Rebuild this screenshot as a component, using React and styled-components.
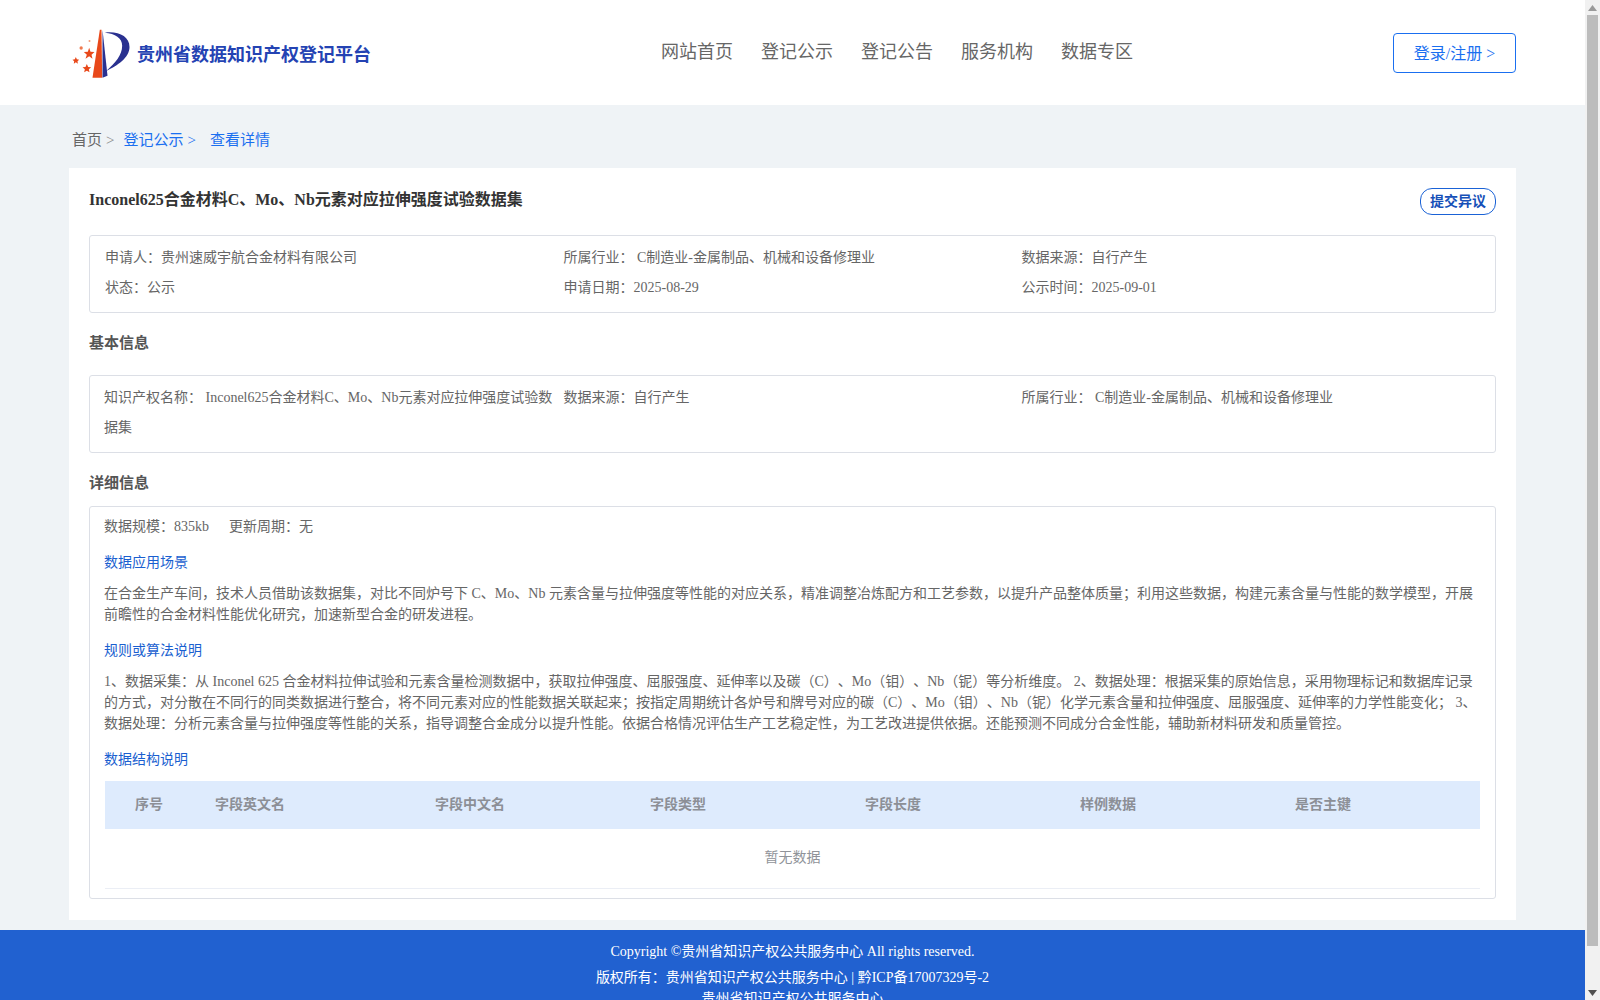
import React from "react";
import styled, { createGlobalStyle } from "styled-components";

const Global = createGlobalStyle`
  html, body { margin: 0; padding: 0; overflow: hidden; height: 1000px; }
  body {
    background: #eff3f6;
    font-family: "Liberation Serif", "Noto Sans CJK SC", serif;
    font-size: 14px;
    color: #666;
    text-spacing-trim: space-all;
    text-autospace: no-autospace;
  }
  * { box-sizing: border-box; }
`;

const Page = styled.div`
  width: 1585px;
  min-height: 1042px;
  display: flex;
  flex-direction: column;
`;
const ScrollTrack = styled.div`
  position: fixed;
  top: 0;
  right: 0;
  bottom: 0;
  width: 15px;
  background: #f1f1f1;
  display: flex;
  flex-direction: column;
  justify-content: space-between;
  align-items: stretch;
`;
const ScrollArrow = styled.div`
  height: 15px;
  display: flex;
  align-items: center;
  justify-content: center;
`;
const ScrollThumb = styled.div`
  flex: 1;
  margin: 0 2px 39px 2px;
  background: #bcbcbc;
`;
const Header = styled.header`
  height: 105px;
  background: #fff;
  display: flex;
  align-items: center;
  padding: 0 69px 0 72px;
`;
const Brand = styled.div`
  width: 589px;
  display: flex;
  align-items: center;
  gap: 6px;
  padding-top: 2px;
`;
const BrandName = styled.span`
  font-size: 18px;
  font-weight: 700;
  color: #2443b3;
  padding-bottom: 2px;
`;
const Nav = styled.nav`
  flex: 1;
  display: flex;
  gap: 28px;
  padding-bottom: 5px;
`;
const NavLink = styled.a`
  font-size: 18px;
  color: #666;
`;
const LoginButton = styled.button`
  width: 123px;
  height: 40px;
  background: #fff;
  border: 1px solid #1a6ff0;
  border-radius: 4px;
  color: #1a6ff0;
  font: inherit;
  font-size: 16px;
  padding: 0 0 2px;
`;
const Main = styled.main`
  padding: 0 69px;
`;
const Crumbs = styled.div`
  height: 63px;
  display: flex;
  align-items: center;
  padding: 3px 0 0 3px;
  font-size: 15px;
`;
const Crumb = styled.span`
  color: ${(p) => (p.$active ? "#1a6ff0" : "#666")};
  margin-right: ${(p) => p.$gap || 0}px;
`;
const Sep = styled.span`
  color: ${(p) => (p.$active ? "#1a6ff0" : "#888")};
  margin-left: 4px;
`;
const Card = styled.section`
  background: #fff;
  padding: 20px;
  width: 1447px;
  height: 752px;
`;
const TitleRow = styled.div`
  height: 47px;
  display: flex;
  justify-content: space-between;
  align-items: flex-start;
`;
const Title = styled.h1`
  margin: 1px 0 0;
  font-size: 16px;
  line-height: 22px;
  color: #333;
`;
const Objection = styled.button`
  width: 76px;
  height: 27px;
  background: #fff;
  border: 1px solid #1a62d6;
  border-radius: 12px;
  color: #1650b8;
  font: inherit;
  font-size: 14px;
  font-weight: 700;
  padding: 0 0 3px;
`;
const InfoBox = styled.div`
  border: 1px solid #dcdfe6;
  border-radius: 3px;
  padding: 7px 15px 9px ${(p) => (p.$tight ? 14 : 15)}px;
  display: grid;
  grid-template-columns: ${(p) => (p.$tight ? "459.5px" : "458.5px")} 458px 1fr;
  line-height: 30px;
`;
const Field = styled.div``;
const SectionTitle = styled.h2`
  margin: 0;
  font-size: 15px;
  line-height: 60px;
  height: ${(p) => p.$h}px;
  color: #555;
`;
const DetailBox = styled.div`
  border: 1px solid #dcdfe6;
  border-radius: 3px;
  padding: 9px 15px 10px 14px;
  height: 393px;
`;
const Meta = styled.div`
  display: flex;
  gap: 20px;
  line-height: 22px;
`;
const SubTitle = styled.div`
  color: #1a5fd0;
  line-height: 22px;
  margin-top: ${(p) => p.$top || 14}px;
`;
const Para = styled.p`
  margin: 9px 0 0;
  line-height: 21px;
`;
const TableHead = styled.div`
  margin: 10px 0 0 1px;
  height: 48px;
  background: #deebfd;
  display: grid;
  grid-template-columns: 88px 220px 215px 215px 215px 215px 207px;
  align-items: center;
  font-weight: 700;
  color: #8c8f96;
  padding-bottom: 4px;
`;
const HeadCell = styled.div`
  padding-left: ${(p) => (p.$center ? 0 : 22)}px;
  text-align: ${(p) => (p.$center ? "center" : "left")};
`;
const Empty = styled.div`
  margin-left: 1px;
  height: 60px;
  line-height: 57px;
  text-align: center;
  color: #909399;
  border-bottom: 1px solid #ebeef5;
`;
const Footer = styled.footer`
  margin-top: 10px;
  flex: 1;
  background: #2161d0;
  color: #fff;
  text-align: center;
  padding-top: 11px;
`;
const FootLine = styled.div`
  line-height: ${(p) => p.$lh || 22}px;
  margin-bottom: ${(p) => p.$mb || 0}px;
`;

const Logo = () => (
  <svg width="59" height="50" viewBox="36 26 176 150" aria-hidden="true">
    <path d="M119 28 L124 28 L126 172 L97 172 Z" fill="#e8481a" />
    <path d="M127 28 L142 166 L127 172 Z" fill="#2a3190" />
    <path d="M134 37 C175 32 208 48 208 80 C208 112 172 136 138 152 C165 128 186 104 186 76 C186 52 165 40 134 37 Z" fill="#2a3190" />
    <path d="M87 82 L91 94 L103 95 L94 103 L97 115 L87 108 L76 115 L80 103 L71 95 L83 94 Z" fill="#e8481a" />
    <path d="M47 110 L50 117 L57 118 L52 123 L53 130 L47 126 L41 130 L42 123 L37 118 L44 117 Z" fill="#e8481a" />
    <path d="M80 131 L84 140 L93 141 L86 147 L88 156 L80 151 L72 156 L74 147 L67 141 L76 140 Z" fill="#e8481a" />
    <circle cx="63" cy="83" r="5" fill="#ef7a50" />
    <circle cx="88" cy="62" r="3" fill="#f29a78" />
  </svg>
);

const heads = ["字段英文名", "字段中文名", "字段类型", "字段长度", "样例数据", "是否主键"];

export default function App() {
  return (
    <Page>
      <Global />
      <Header>
        <Brand>
          <Logo />
          <BrandName>贵州省数据知识产权登记平台</BrandName>
        </Brand>
        <Nav>
          {["网站首页", "登记公示", "登记公告", "服务机构", "数据专区"].map((n) => (
            <NavLink key={n}>{n}</NavLink>
          ))}
        </Nav>
        <LoginButton>登录/注册 &gt;</LoginButton>
      </Header>
      <Main>
        <Crumbs>
          <Crumb $gap={9}>首页<Sep>&gt;</Sep></Crumb>
          <Crumb $active $gap={14}>登记公示<Sep $active>&gt;</Sep></Crumb>
          <Crumb $active>查看详情</Crumb>
        </Crumbs>
        <Card>
          <TitleRow>
            <Title>Inconel625合金材料C、Mo、Nb元素对应拉伸强度试验数据集</Title>
            <Objection>提交异议</Objection>
          </TitleRow>
          <InfoBox>
            <Field>申请人：贵州速威宇航合金材料有限公司</Field>
            <Field>所属行业： C制造业-金属制品、机械和设备修理业</Field>
            <Field>数据来源：自行产生</Field>
            <Field>状态：公示</Field>
            <Field>申请日期：2025-08-29</Field>
            <Field>公示时间：2025-09-01</Field>
          </InfoBox>
          <SectionTitle $h={62}>基本信息</SectionTitle>
          <InfoBox $tight>
            <Field>知识产权名称： Inconel625合金材料C、Mo、Nb元素对应拉伸强度试验数据集</Field>
            <Field>数据来源：自行产生</Field>
            <Field>所属行业： C制造业-金属制品、机械和设备修理业</Field>
          </InfoBox>
          <SectionTitle $h={53}>详细信息</SectionTitle>
          <DetailBox>
            <Meta>
              <span>数据规模：835kb</span>
              <span>更新周期：无</span>
            </Meta>
            <SubTitle>数据应用场景</SubTitle>
            <Para>
              在合金生产车间，技术人员借助该数据集，对比不同炉号下 C、Mo、Nb 元素含量与拉伸强度等性能的对应关系，精准调整冶炼配方和工艺参数，以提升产品整体质量；利用这些数据，构建元素含量与性能的数学模型，开展前瞻性的合金材料性能优化研究，加速新型合金的研发进程。
            </Para>
            <SubTitle $top={15}>规则或算法说明</SubTitle>
            <Para>
              1、数据采集：从 Inconel 625 合金材料拉伸试验和元素含量检测数据中，获取拉伸强度、屈服强度、延伸率以及碳（C）、Mo（钼）、Nb（铌）等分析维度。 2、数据处理：根据采集的原始信息，采用物理标记和数据库记录的方式，对分散在不同行的同类数据进行整合，将不同元素对应的性能数据关联起来；按指定周期统计各炉号和牌号对应的碳（C）、Mo（钼）、Nb（铌）化学元素含量和拉伸强度、屈服强度、延伸率的力学性能变化； 3、数据处理：分析元素含量与拉伸强度等性能的关系，指导调整合金成分以提升性能。依据合格情况评估生产工艺稳定性，为工艺改进提供依据。还能预测不同成分合金性能，辅助新材料研发和质量管控。
            </Para>
            <SubTitle $top={15}>数据结构说明</SubTitle>
            <TableHead>
              <HeadCell $center>序号</HeadCell>
              {heads.map((h) => (
                <HeadCell key={h}>{h}</HeadCell>
              ))}
            </TableHead>
            <Empty>暂无数据</Empty>
          </DetailBox>
        </Card>
      </Main>
      <Footer>
        <FootLine $lh={22} $mb={4}>Copyright ©贵州省知识产权公共服务中心 All rights reserved.</FootLine>
        <FootLine $lh={22}>版权所有：贵州省知识产权公共服务中心 | 黔ICP备17007329号-2</FootLine>
        <FootLine $lh={20}>贵州省知识产权公共服务中心</FootLine>
      </Footer>
      <ScrollTrack>
        <ScrollArrow>
          <svg width="9" height="6" viewBox="0 0 9 6"><path d="M4.5 0 L9 6 L0 6 Z" fill="#9a9a9a" /></svg>
        </ScrollArrow>
        <ScrollThumb />
        <ScrollArrow>
          <svg width="9" height="6" viewBox="0 0 9 6"><path d="M0 0 L9 0 L4.5 6 Z" fill="#505050" /></svg>
        </ScrollArrow>
      </ScrollTrack>
    </Page>
  );
}
